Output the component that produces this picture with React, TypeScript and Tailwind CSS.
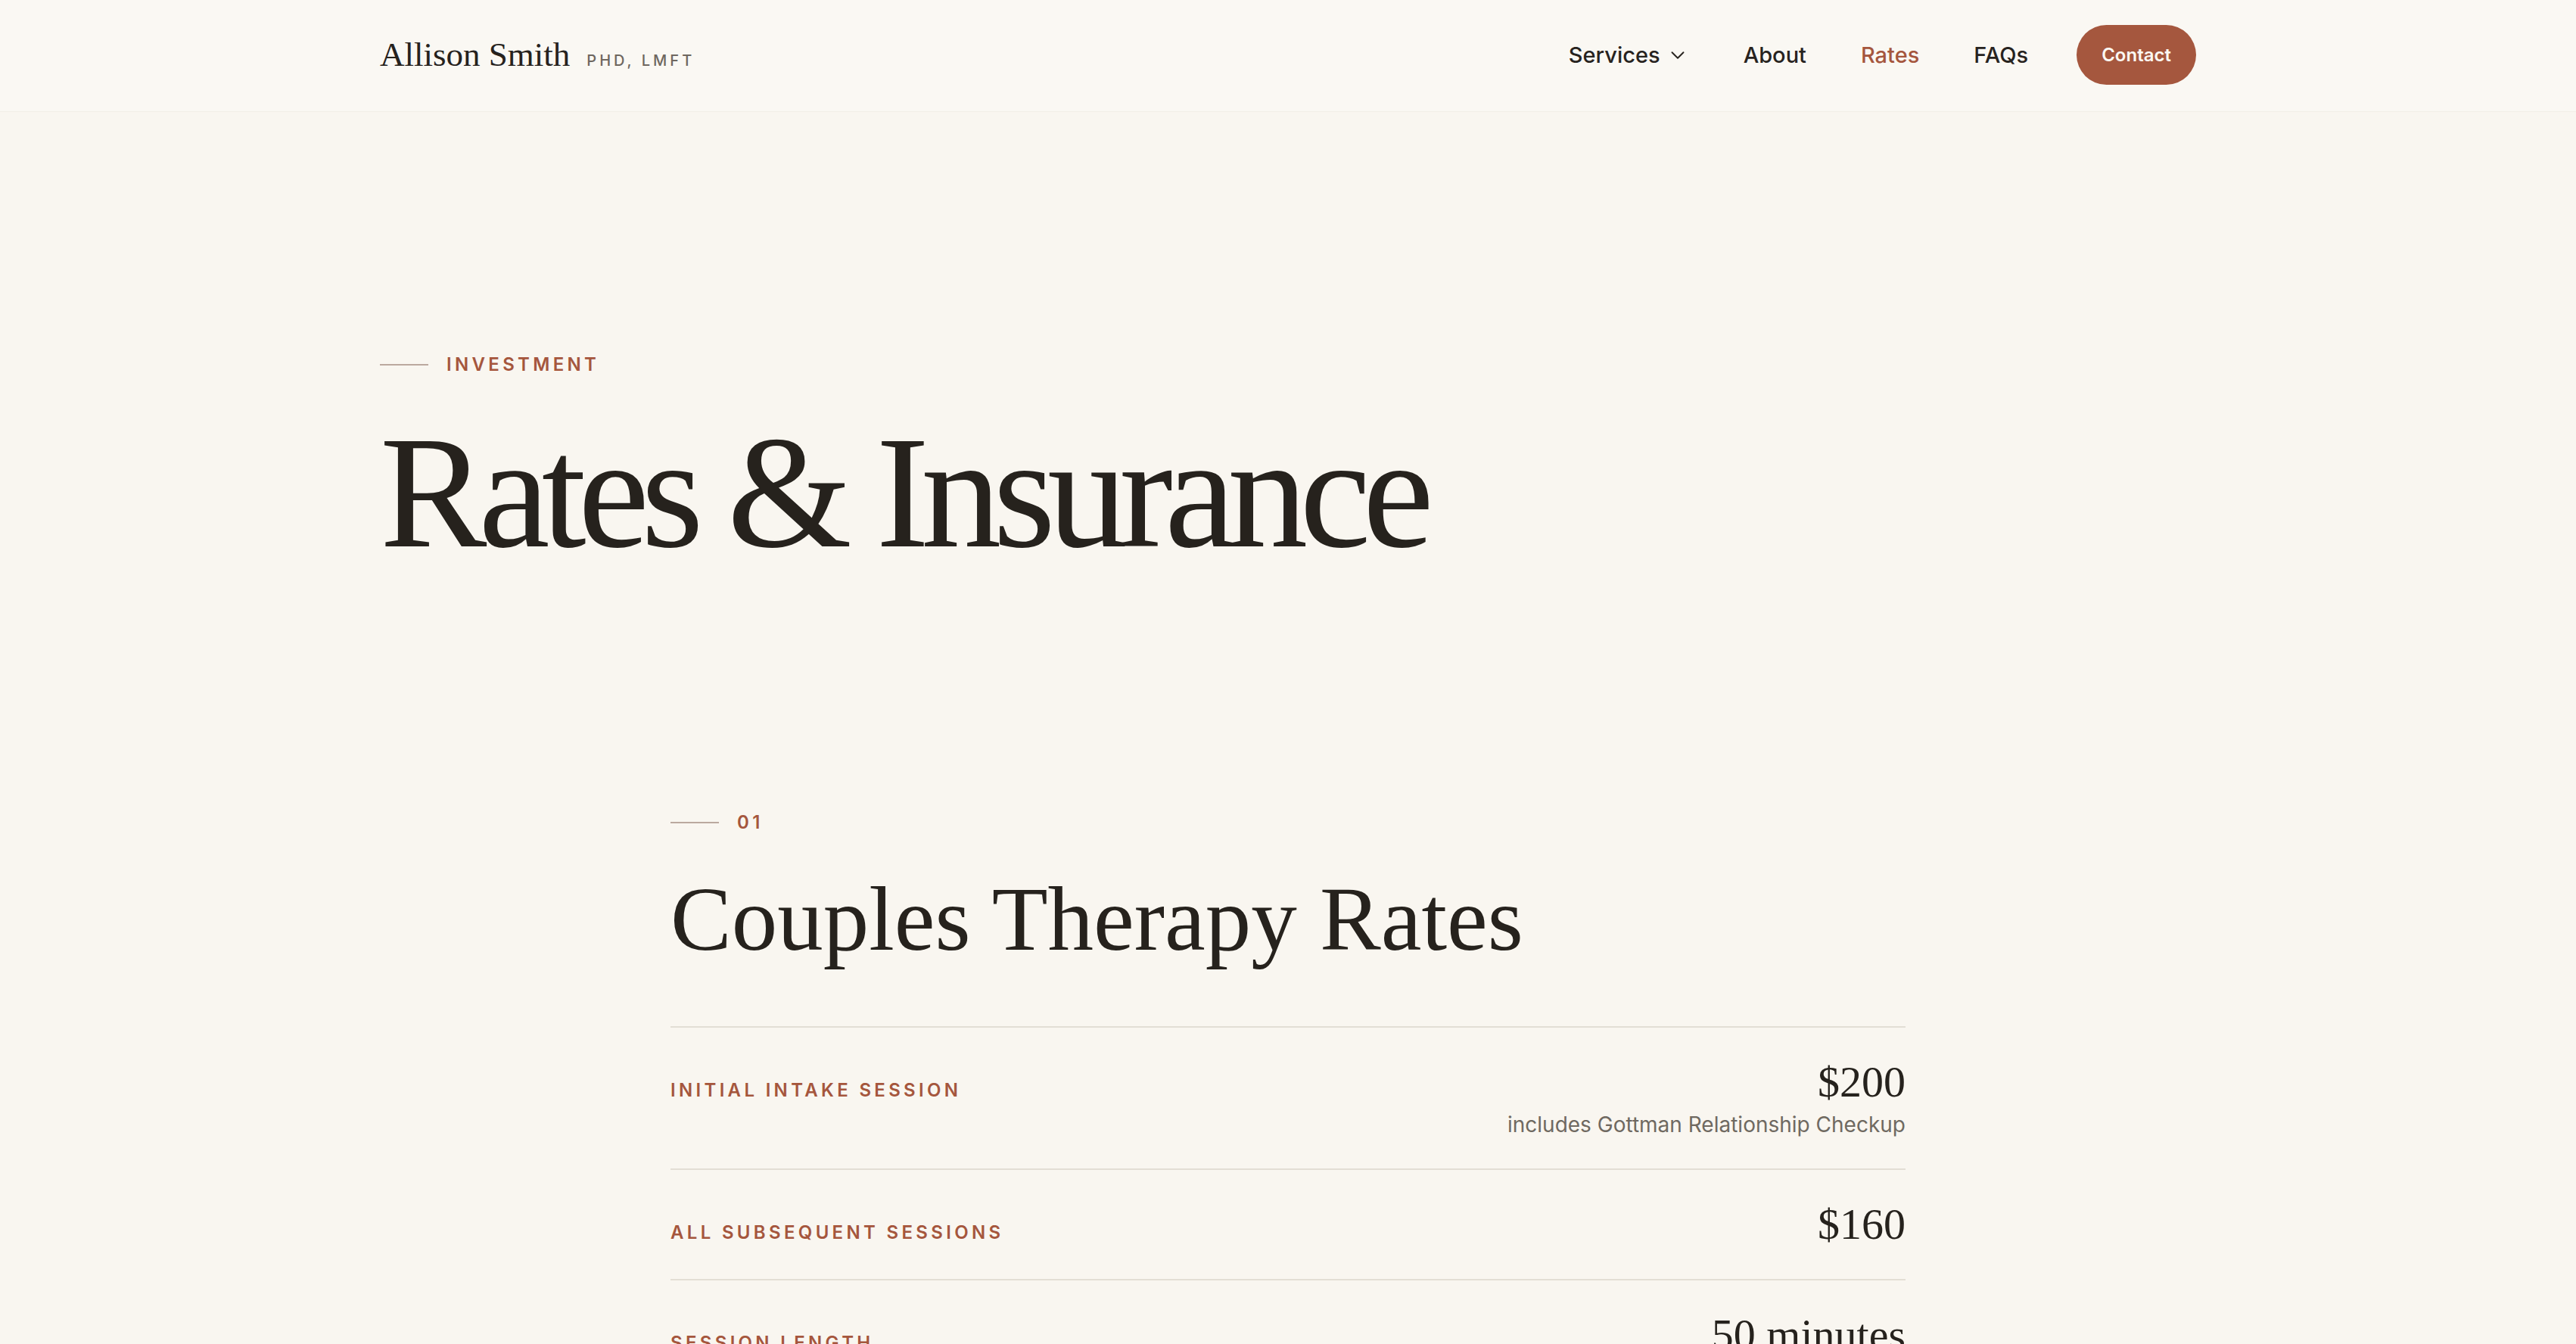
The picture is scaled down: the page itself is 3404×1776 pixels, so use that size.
import React from 'react';
import { ChevronDown } from 'lucide-react';

const serif = { fontFamily: '"Liberation Serif", "Times New Roman", serif' };

const navLinks = [
  { label: 'About', active: false },
  { label: 'Rates', active: true },
  { label: 'FAQs', active: false },
];

const rates = [
  { label: 'Initial Intake Session', price: '$200', note: 'includes Gottman Relationship Checkup' },
  { label: 'All Subsequent Sessions', price: '$160' },
  { label: 'Session Length', price: '50 minutes' },
  { label: 'Payment', price: 'Private pay' },
];

const Eyebrow: React.FC<{ text: string }> = ({ text }) => (
  <div className="flex items-center gap-[24px]">
    <span className="block w-[64px] h-[2px] bg-[#bba99f]" />
    <span className="text-[24px] leading-[36px] font-semibold tracking-[0.18em] uppercase text-[#a5563d]">
      {text}
    </span>
  </div>
);

const Header: React.FC = () => (
  <header className="h-[148px] bg-[#faf8f3] border-b border-[#f2eee7]">
    <div className="mx-auto w-[2400px] h-full flex items-center justify-between">
      <div className="flex items-baseline gap-[22px] -mt-[2px]">
        <span className="text-[45px] text-[#26221d]" style={serif}>
          Allison Smith
        </span>
        <span className="text-[20px] font-medium tracking-[0.2em] text-[#6e675f]">PHD, LMFT</span>
      </div>
      <nav className="flex items-center gap-[64px] -mt-[2px]">
        <div className="flex items-center gap-[72px] text-[29px] font-medium text-[#27231e]">
          <a className="flex items-center gap-[8px]">
            Services
            <ChevronDown size={30} strokeWidth={1.5} />
          </a>
          {navLinks.map((l) => (
            <a key={l.label} className={l.active ? 'text-[#a5563d]' : ''}>
              {l.label}
            </a>
          ))}
        </div>
        <button className="h-[79px] px-[33px] rounded-full bg-[#a5573e] text-[#fbf8f2] text-[24px] font-semibold">
          Contact
        </button>
      </nav>
    </div>
  </header>
);

export default function App() {
  return (
    <div className="min-h-screen bg-[#f9f6f0] text-[#26221d]" style={{ fontFamily: 'Inter, "Noto Sans", sans-serif' }}>
      <Header />

      {/* Hero */}
      <section className="mx-auto w-[2400px] pt-[316px] pb-[312px]">
        <Eyebrow text="Investment" />
        <h1
          className="mt-[45px] text-[212px] leading-none tracking-[-0.051em] text-[#26221d]"
          style={serif}
        >
          Rates &amp; Insurance
        </h1>
      </section>

      {/* Couples */}
      <section className="mx-auto w-[1632px] pb-[160px]">
        <Eyebrow text="01" />
        <h2 className="mt-[43px] mb-[75px] text-[121px] leading-[1.1] text-[#26221d]" style={serif}>
          Couples Therapy Rates
        </h2>
        <div className="border-t-2 border-[#e3ded5]">
          {rates.map((r) => (
            <div key={r.label} className="flex items-baseline justify-between py-[37px] border-b-2 border-[#e3ded5]">
              <span className="text-[24px] font-semibold tracking-[0.18em] uppercase text-[#a5563d]">
                {r.label}
              </span>
              <div className="flex flex-col items-end">
                <span className="text-[58px] leading-[70px] text-[#26221d]" style={serif}>
                  {r.price}
                </span>
                {r.note && <span className="text-[28px] leading-[42px] text-[#6f6961]">{r.note}</span>}
              </div>
            </div>
          ))}
        </div>
      </section>
    </div>
  );
}
